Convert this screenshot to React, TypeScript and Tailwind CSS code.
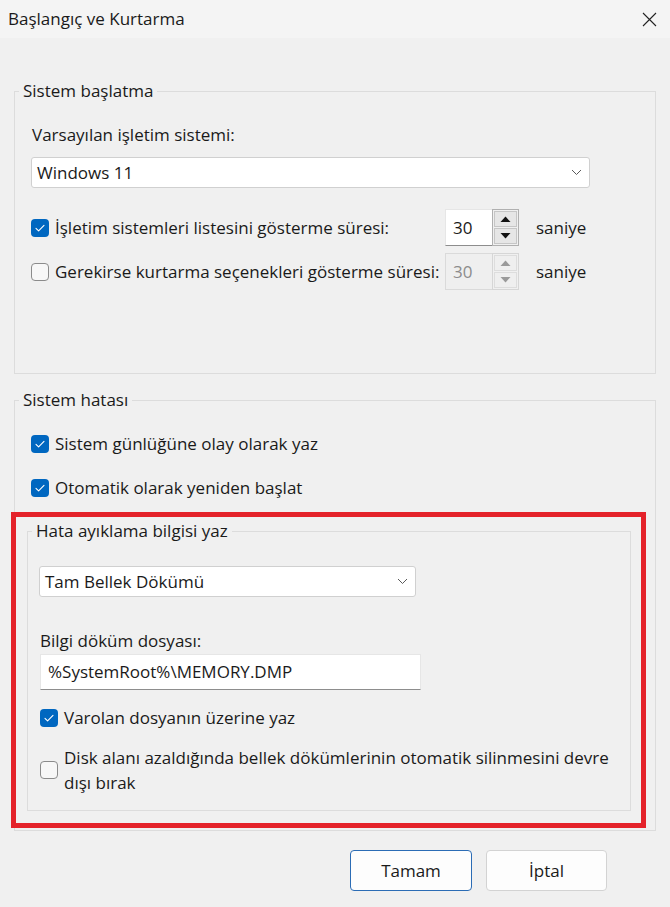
import React from 'react';

const Checkbox: React.FC<{ checked?: boolean }> = ({ checked }) =>
  checked ? (
    <span className="flex h-[18px] w-[18px] shrink-0 items-center justify-center rounded-[4px] bg-[#0067c0]">
      <svg width="18" height="18" viewBox="0 0 18 18" fill="none">
        <path d="M5 9.3l2.6 2.6L13 6.4" stroke="#fff" strokeWidth="1.1" strokeLinecap="round" strokeLinejoin="round" />
      </svg>
    </span>
  ) : (
    <span className="h-[18px] w-[18px] shrink-0 rounded-[4px] border border-[#8b8b8b] bg-[#f7f7f7]" />
  );

const Chevron: React.FC = () => (
  <svg width="11" height="7" viewBox="0 0 11 7" fill="none">
    <path d="M1 1l4.5 4.5L10 1" stroke="#5a5a5a" strokeWidth="1" />
  </svg>
);

const Combo: React.FC<{ value: string; width: string }> = ({ value, width }) => (
  <div
    className={`flex h-[31px] items-center justify-between rounded-[3px] border border-[#d0d0d0] bg-white pl-[5px] pr-[7px] ${width}`}
  >
    <span>{value}</span>
    <Chevron />
  </div>
);

const Arrow: React.FC<{ up?: boolean; color: string }> = ({ up, color }) => (
  <svg width="11" height="6" viewBox="0 0 11 6">
    <path d={up ? 'M0.5 6L5.5 0.5L10.5 6Z' : 'M0.5 0L5.5 5.5L10.5 0Z'} fill={color} />
  </svg>
);

const Spinner: React.FC<{ disabled?: boolean }> = ({ disabled }) => (
  <div className="flex h-[37px]">
    <div
      className={`flex w-[47px] items-center border border-r-0 pl-[7px] ${
        disabled
          ? 'border-[#dadada] bg-[#efefef] text-[#8c8c8c]'
          : 'border-[#e6e6e6] border-b-[#8d8d8d] bg-white'
      }`}
    >
      30
    </div>
    <div
      className={`flex w-[27px] flex-col gap-[1px] border p-[1px] ${
        disabled ? 'border-[#d6d6d6]' : 'border-[#b0b0b0]'
      }`}
    >
      <div
        className={`flex flex-1 items-center justify-center border ${
          disabled ? 'border-[#dddddd] bg-[#efefef]' : 'border-[#c6c6c6] bg-[#e6e6e6]'
        }`}
      >
        <Arrow up color={disabled ? '#9a9a9a' : '#111'} />
      </div>
      <div
        className={`flex flex-1 items-center justify-center border ${
          disabled ? 'border-[#dddddd] bg-[#efefef]' : 'border-[#c6c6c6] bg-[#e6e6e6]'
        }`}
      >
        <Arrow color={disabled ? '#9a9a9a' : '#111'} />
      </div>
    </div>
  </div>
);

const SpinRow: React.FC<{ label: string; checked?: boolean; disabled?: boolean }> = ({
  label,
  checked,
  disabled,
}) => (
  <div className="flex items-center">
    <div className="flex w-[414px] items-center gap-[6px]">
      <Checkbox checked={checked} />
      <span>{label}</span>
    </div>
    <Spinner disabled={disabled} />
    <span className="ml-[17px]">saniye</span>
  </div>
);

const CheckRow: React.FC<{ label: string; checked?: boolean; className?: string }> = ({
  label,
  checked,
  className,
}) => (
  <div className={`flex items-center gap-[6px] ${className ?? ''}`}>
    <Checkbox checked={checked} />
    <span>{label}</span>
  </div>
);

export default function App() {
  return (
    <div className="relative h-[907px] w-[670px] overflow-hidden bg-[#f0f0f0] font-['Open_Sans',sans-serif] text-[17px] leading-[24px] text-[#1a1a1a]">
      {/* title bar */}
      <div className="flex h-[38px] items-center justify-between bg-[#f4f4f4] pl-[8px] pr-[13px]">
        <span>Başlangıç ve Kurtarma</span>
        <svg width="15" height="15" viewBox="0 0 15 15" fill="none">
          <path d="M1 1l13 13M14 1L1 14" stroke="#222" strokeWidth="1.1" />
        </svg>
      </div>

      <div className="px-[14px]">
        {/* Sistem başlatma */}
        <fieldset className="mt-[41px] h-[295px] border border-[#dcdcdc]">
          <legend className="ml-[4px] px-[4px]">Sistem başlatma</legend>
          <div className="flex flex-col pl-[16px]">
            <span className="mt-[20px] pl-[1px]">Varsayılan işletim sistemi:</span>
            <div className="mt-[10px]">
              <Combo value="Windows 11" width="w-[559px]" />
            </div>
            <div className="mt-[21px]">
              <SpinRow label="İşletim sistemleri listesini gösterme süresi:" checked />
            </div>
            <div className="mt-[7px]">
              <SpinRow label="Gerekirse kurtarma seçenekleri gösterme süresi:" disabled />
            </div>
          </div>
        </fieldset>

        {/* Sistem hatası */}
        <fieldset className="mt-[14px] h-[443px] border border-[#dcdcdc]">
          <legend className="ml-[4px] px-[4px]">Sistem hatası</legend>
          <div className="flex flex-col pl-[12px]">
            <CheckRow className="ml-[4px] mt-[20px]" label="Sistem günlüğüne olay olarak yaz" checked />
            <CheckRow className="ml-[4px] mt-[20px]" label="Otomatik olarak yeniden başlat" checked />

            <fieldset className="mt-[19px] h-[292px] w-[604px] border border-[#dcdcdc]">
              <legend className="ml-[4px] px-[4px]">Hata ayıklama bilgisi yaz</legend>
              <div className="flex flex-col pl-[11px]">
                <div className="mt-[23px]">
                  <Combo value="Tam Bellek Dökümü" width="w-[377px]" />
                </div>
                <span className="ml-[1px] mt-[32px]">Bilgi döküm dosyası:</span>
                <div className="ml-[1px] mt-[1px] flex h-[36px] w-[381px] items-center border border-[#e6e6e6] border-b-[#8d8d8d] bg-white pl-[7px]">
                  {'%SystemRoot%\\MEMORY.DMP'}
                </div>
                <CheckRow className="ml-[1px] mt-[16px]" label="Varolan dosyanın üzerine yaz" checked />
                <div className="ml-[1px] mt-[15px] flex items-center gap-[6px]">
                  <Checkbox />
                  <span className="leading-[25px]">
                    Disk alanı azaldığında bellek dökümlerinin otomatik silinmesini devre
                    <br />
                    dışı bırak
                  </span>
                </div>
              </div>
            </fieldset>
          </div>
        </fieldset>
      </div>

      {/* buttons */}
      <div className="mt-[19px] flex justify-end gap-[14px] pr-[63px]">
        <button className="h-[41px] w-[122px] rounded-[4px] border border-[#2b6cb5] bg-[#fdfdfd]">Tamam</button>
        <button className="h-[41px] w-[121px] rounded-[4px] border border-[#d3d3d3] bg-[#fdfdfd]">İptal</button>
      </div>

      {/* highlight annotation */}
      <div className="pointer-events-none absolute left-[11px] top-[512px] h-[316px] w-[635px] border-[5px] border-[#e4222a]" />
    </div>
  );
}
